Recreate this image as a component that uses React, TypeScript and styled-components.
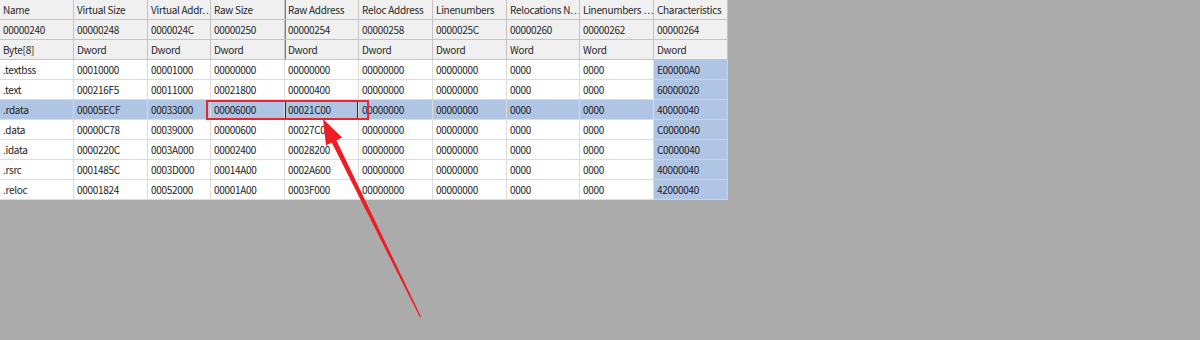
import React from "react";
import styled, { createGlobalStyle } from "styled-components";

const Global = createGlobalStyle`
  html, body { margin: 0; padding: 0; background: #ababab; }
  body { font-family: "Noto Sans CJK SC", "Noto Sans", sans-serif; }
`;

const widths = [74, 74, 63, 74, 74, 74, 74, 73, 74, 74];

const Page = styled.div`
  position: relative;
  width: 1200px;
  height: 340px;
  background: #ababab;
  overflow: hidden;
`;

const Table = styled.div`
  display: grid;
  grid-template-columns: ${widths.map((w) => `${w}px`).join(" ")};
  grid-auto-rows: 20px;
  width: 728px;
  background: #ffffff;
`;

const HeadCell = styled.div<{ $focus?: boolean }>`
  box-sizing: border-box;
  background: #f0f0f0;
  border-right: 1px solid #c4c4c4;
  border-bottom: 1px solid #c4c4c4;
  ${(p) => (p.$focus ? "box-shadow: inset 1px 0 0 #7c7c7c;" : "")}
  padding: 0 0 0 3px;
  font-size: 10px;
  letter-spacing: -0.3px;
  line-height: 19px;
  color: #262626;
  white-space: nowrap;
  overflow: hidden;
`;

const Cell = styled.div<{ $sel?: boolean; $blue?: boolean; $focus?: boolean }>`
  box-sizing: border-box;
  background: ${(p) => (p.$sel || p.$blue ? "#b0c4e4" : "#ffffff")};
  border-right: 1px solid ${(p) => (p.$blue ? "#c6d3ea" : "#dcdcdc")};
  border-bottom: 1px solid ${(p) => (p.$blue ? "#c6d3ea" : "#dcdcdc")};
  ${(p) => (p.$focus ? "box-shadow: inset 0 0 0 1px #2a2a2a;" : "")}
  padding: 0 0 0 3px;
  font-size: 10px;
  letter-spacing: -0.3px;
  line-height: 19px;
  color: #1c1c1c;
  white-space: nowrap;
  overflow: hidden;
`;

const Highlight = styled.div`
  position: absolute;
  left: 206px;
  top: 100px;
  width: 163px;
  height: 20px;
  box-sizing: border-box;
  border: 2px solid #e8262d;
`;

const Arrow = styled.svg`
  position: absolute;
  left: 0;
  top: 0;
  width: 1200px;
  height: 340px;
  pointer-events: none;
`;

const headers = [
  "Name",
  "Virtual Size",
  "Virtual Addr…",
  "Raw Size",
  "Raw Address",
  "Reloc Address",
  "Linenumbers",
  "Relocations N…",
  "Linenumbers …",
  "Characteristics",
];

const offsets = [
  "00000240",
  "00000248",
  "0000024C",
  "00000250",
  "00000254",
  "00000258",
  "0000025C",
  "00000260",
  "00000262",
  "00000264",
];

const types = ["Byte[8]", "Dword", "Dword", "Dword", "Dword", "Dword", "Dword", "Word", "Word", "Dword"];

const rows: string[][] = [
  [".textbss", "00010000", "00001000", "00000000", "00000000", "00000000", "00000000", "0000", "0000", "E00000A0"],
  [".text", "000216F5", "00011000", "00021800", "00000400", "00000000", "00000000", "0000", "0000", "60000020"],
  [".rdata", "00005ECF", "00033000", "00006000", "00021C00", "00000000", "00000000", "0000", "0000", "40000040"],
  [".data", "00000C78", "00039000", "00000600", "00027C00", "00000000", "00000000", "0000", "0000", "C0000040"],
  [".idata", "0000220C", "0003A000", "00002400", "00028200", "00000000", "00000000", "0000", "0000", "C0000040"],
  [".rsrc", "0001485C", "0003D000", "00014A00", "0002A600", "00000000", "00000000", "0000", "0000", "40000040"],
  [".reloc", "00001824", "00052000", "00001A00", "0003F000", "00000000", "00000000", "0000", "0000", "42000040"],
];

function arrowPoints() {
  const tip = [323, 119];
  const tail = [420.5, 317];
  const dx = tail[0] - tip[0];
  const dy = tail[1] - tip[1];
  const len = Math.hypot(dx, dy);
  const u = [dx / len, dy / len];
  const p = [u[1], -u[0]];
  const hl = 25;
  const hw = 9;
  const sw = 2.6;
  const tw = 0.7;
  const b = [tip[0] + u[0] * hl, tip[1] + u[1] * hl];
  const pts = [
    tip,
    [b[0] + p[0] * hw, b[1] + p[1] * hw],
    [b[0] + p[0] * sw, b[1] + p[1] * sw],
    [tail[0] + p[0] * tw, tail[1] + p[1] * tw],
    [tail[0] - p[0] * tw, tail[1] - p[1] * tw],
    [b[0] - p[0] * sw, b[1] - p[1] * sw],
    [b[0] - p[0] * hw, b[1] - p[1] * hw],
  ];
  return pts.map((q) => `${q[0].toFixed(1)},${q[1].toFixed(1)}`).join(" ");
}

export default function App() {
  return (
    <Page>
      <Global />
      <Table>
        {headers.map((h, i) => (
          <HeadCell key={`h${i}`} $focus={i === 4}>{h}</HeadCell>
        ))}
        {offsets.map((h, i) => (
          <HeadCell key={`o${i}`} $focus={i === 4}>{h}</HeadCell>
        ))}
        {types.map((h, i) => (
          <HeadCell key={`t${i}`} $focus={i === 4}>{h}</HeadCell>
        ))}
        {rows.map((r, ri) =>
          r.map((v, ci) => (
            <Cell
              key={`${ri}-${ci}`}
              $sel={ri === 2}
              $blue={ci === 9}
              $focus={ri === 2 && ci === 4}
            >
              {v}
            </Cell>
          ))
        )}
      </Table>
      <Highlight />
      <Arrow viewBox="0 0 1200 340">
        <polygon points={arrowPoints()} fill="#ee1c25" />
      </Arrow>
    </Page>
  );
}
